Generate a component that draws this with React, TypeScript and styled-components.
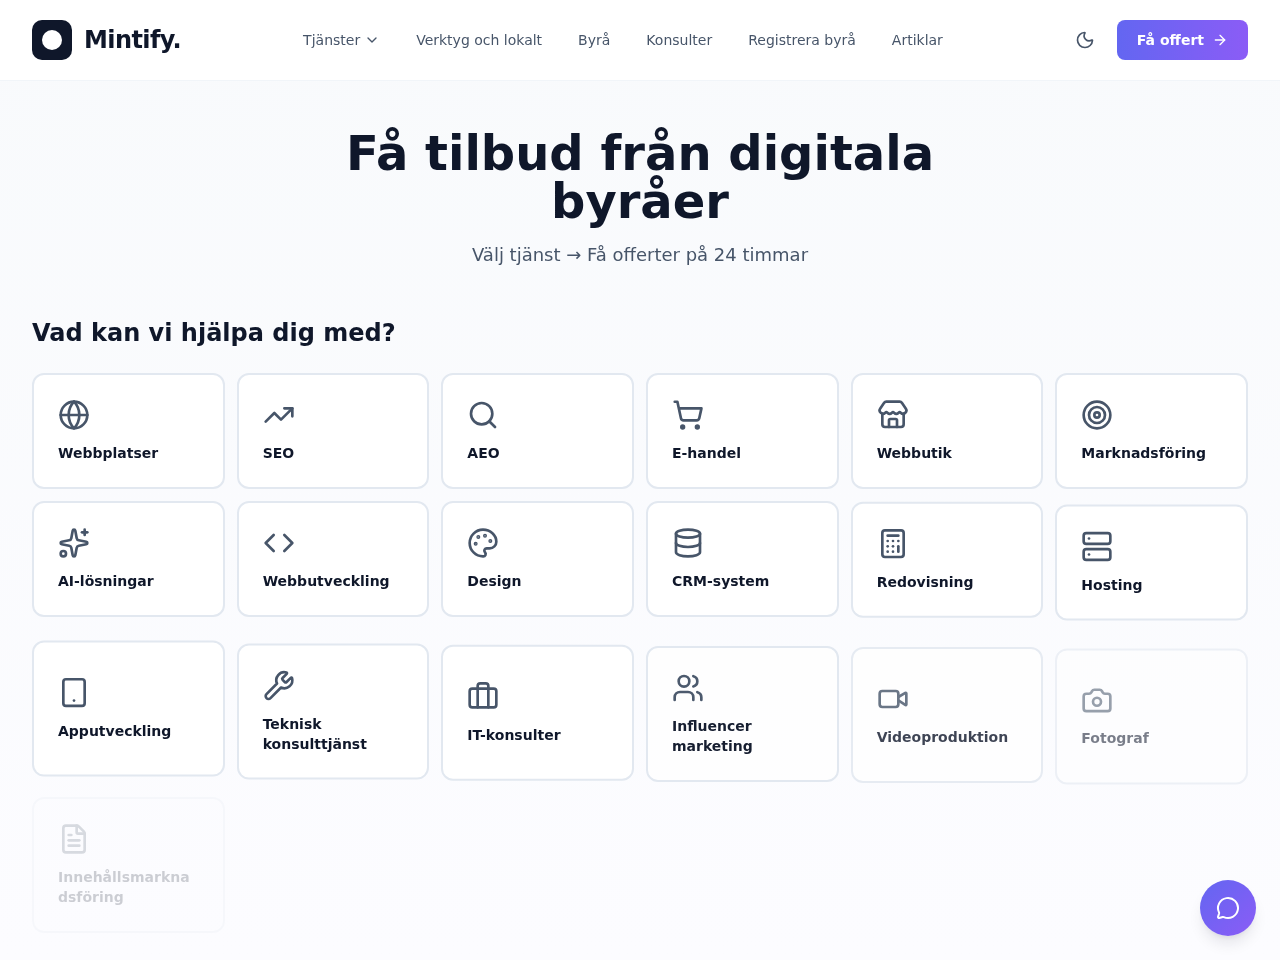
import React from 'react'
import styled, { createGlobalStyle } from 'styled-components'
import {
  ArrowRight,
  Briefcase,
  Calculator,
  Camera,
  ChevronDown,
  Code,
  Database,
  FileText,
  Globe,
  MessageCircle,
  Moon,
  Palette,
  Search,
  Server,
  ShoppingCart,
  Sparkles,
  Store,
  Tablet,
  Target,
  TrendingUp,
  Users,
  Video,
  Wrench,
} from 'lucide-react'

const GlobalStyle = createGlobalStyle`
  html, body {
    margin: 0;
    padding: 0;
  }
  body {
    font-family: 'DejaVu Sans', sans-serif;
    background: #fbfcfe;
    color: #0f172a;
  }
  * {
    box-sizing: border-box;
  }
`

const Page = styled.div`
  position: relative;
  height: 960px;
  overflow: hidden;
  background: linear-gradient(180deg, #f8fafc 0%, #fcfcff 100%);
  filter: opacity(0.999);
`

const Header = styled.header`
  display: flex;
  align-items: center;
  justify-content: space-between;
  height: 81px;
  padding: 0 32px;
  background: #fff;
  border-bottom: 1px solid #f1f5f9;
`

const Logo = styled.div`
  display: flex;
  align-items: center;
  gap: 12px;
`

const LogoMark = styled.div`
  display: flex;
  align-items: center;
  justify-content: center;
  width: 40px;
  height: 40px;
  background: #0f172a;
  border-radius: 10px;

  &::after {
    content: '';
    width: 20px;
    height: 20px;
    background: #fff;
    border-radius: 50%;
  }
`

const LogoText = styled.span`
  font-size: 24px;
  line-height: 32px;
  font-weight: 700;
  letter-spacing: -0.6px;
  color: #0f172a;
`

const Nav = styled.nav`
  display: flex;
  align-items: center;
  gap: 36px;
`

const NavLink = styled.a`
  display: flex;
  align-items: center;
  gap: 4px;
  font-size: 14px;
  line-height: 20px;
  color: #475569;
`

const Actions = styled.div`
  display: flex;
  align-items: center;
  gap: 12px;
`

const ThemeButton = styled.button`
  display: flex;
  align-items: center;
  justify-content: center;
  width: 40px;
  height: 40px;
  padding: 0;
  border: 0;
  background: transparent;
  color: #475569;
`

const OfferButton = styled.button`
  display: flex;
  align-items: center;
  gap: 8px;
  height: 40px;
  padding: 0 20px;
  border: 0;
  border-radius: 8px;
  background: linear-gradient(90deg, #6366f1, #8b5cf6);
  color: #fff;
  font-family: inherit;
  font-size: 14px;
  font-weight: 700;
`

const Main = styled.main`
  padding: 48px 32px 0;
`

const Hero = styled.section`
  max-width: 672px;
  margin: 0 auto 48px;
  text-align: center;
`

const Title = styled.h1`
  margin: 0 0 16px;
  font-size: 48px;
  line-height: 48px;
  font-weight: 700;
  color: #0f172a;
`

const Subtitle = styled.p`
  margin: 0;
  font-size: 18px;
  line-height: 28px;
  color: #475569;
`

const SectionTitle = styled.h2`
  margin: 0 0 24px;
  font-size: 24px;
  line-height: 32px;
  font-weight: 700;
  color: #0f172a;
`

const Grid = styled.div`
  display: grid;
  grid-template-columns: repeat(6, minmax(0, 1fr));
  gap: 12px;
`

const Card = styled.a<{ $lift: number; $fade: number }>`
  display: flex;
  flex-direction: column;
  justify-content: center;
  gap: 12px;
  padding: 24px;
  background: #fff;
  border: 2px solid #e2e8f0;
  border-radius: 12px;
  opacity: ${(props) => props.$fade};
  transform: translateY(${(props) => props.$lift}px);
`

const CardIcon = styled.span`
  display: block;
  height: 32px;
  color: #475569;
`

const CardLabel = styled.span`
  font-size: 14px;
  line-height: 20px;
  font-weight: 700;
  color: #0f172a;
  overflow-wrap: break-word;
`

const ChatButton = styled.button`
  position: absolute;
  right: 24px;
  bottom: 24px;
  display: flex;
  align-items: center;
  justify-content: center;
  width: 56px;
  height: 56px;
  padding: 0;
  border: 0;
  border-radius: 50%;
  background: linear-gradient(135deg, #6366f1, #8b5cf6);
  color: #fff;
  box-shadow: 0 10px 15px -3px rgba(15, 23, 42, 0.1), 0 4px 6px -4px rgba(15, 23, 42, 0.1);
`

const services = [
  { label: 'Webbplatser', icon: Globe, lift: 0, fade: 1 },
  { label: 'SEO', icon: TrendingUp, lift: 0, fade: 1 },
  { label: 'AEO', icon: Search, lift: 0, fade: 1 },
  { label: 'E-handel', icon: ShoppingCart, lift: 0, fade: 1 },
  { label: 'Webbutik', icon: Store, lift: 0, fade: 1 },
  { label: 'Marknadsföring', icon: Target, lift: 0, fade: 1 },
  { label: 'AI-lösningar', icon: Sparkles, lift: 0, fade: 1 },
  { label: 'Webbutveckling', icon: Code, lift: 0, fade: 1 },
  { label: 'Design', icon: Palette, lift: 0, fade: 1 },
  { label: 'CRM-system', icon: Database, lift: 0, fade: 1 },
  { label: 'Redovisning', icon: Calculator, lift: 0.7, fade: 1 },
  { label: 'Hosting', icon: Server, lift: 3.5, fade: 1 },
  { label: 'Apputveckling', icon: Tablet, lift: 11.6, fade: 1 },
  { label: 'Teknisk konsulttjänst', icon: Wrench, lift: 14.6, fade: 1 },
  { label: 'IT-konsulter', icon: Briefcase, lift: 15.7, fade: 1 },
  { label: 'Influencer marketing', icon: Users, lift: 17, fade: 0.97 },
  { label: 'Videoproduktion', icon: Video, lift: 18, fade: 0.8 },
  { label: 'Fotograf', icon: Camera, lift: 19.4, fade: 0.55 },
  { label: 'Innehållsmarknadsföring', icon: FileText, lift: 20, fade: 0.2 },
]

const navLinks = ['Verktyg och lokalt', 'Byrå', 'Konsulter', 'Registrera byrå', 'Artiklar']

const App: React.FC = () => {
  return (
    <Page>
      <GlobalStyle />
      <Header>
        <Logo>
          <LogoMark />
          <LogoText>Mintify.</LogoText>
        </Logo>
        <Nav>
          <NavLink>
            Tjänster
            <ChevronDown size={16} />
          </NavLink>
          {navLinks.map((link) => (
            <NavLink key={link}>{link}</NavLink>
          ))}
        </Nav>
        <Actions>
          <ThemeButton aria-label='Tema'>
            <Moon size={20} />
          </ThemeButton>
          <OfferButton>
            Få offert
            <ArrowRight size={16} />
          </OfferButton>
        </Actions>
      </Header>
      <Main>
        <Hero>
          <Title>Få tilbud från digitala byråer</Title>
          <Subtitle>Välj tjänst → Få offerter på 24 timmar</Subtitle>
        </Hero>
        <SectionTitle>Vad kan vi hjälpa dig med?</SectionTitle>
        <Grid>
          {services.map(({ label, icon: Icon, lift, fade }) => (
            <Card key={label} $lift={lift} $fade={fade}>
              <CardIcon>
                <Icon size={32} />
              </CardIcon>
              <CardLabel>{label}</CardLabel>
            </Card>
          ))}
        </Grid>
      </Main>
      <ChatButton aria-label='Chatt'>
        <MessageCircle size={24} />
      </ChatButton>
    </Page>
  )
}

export default App
